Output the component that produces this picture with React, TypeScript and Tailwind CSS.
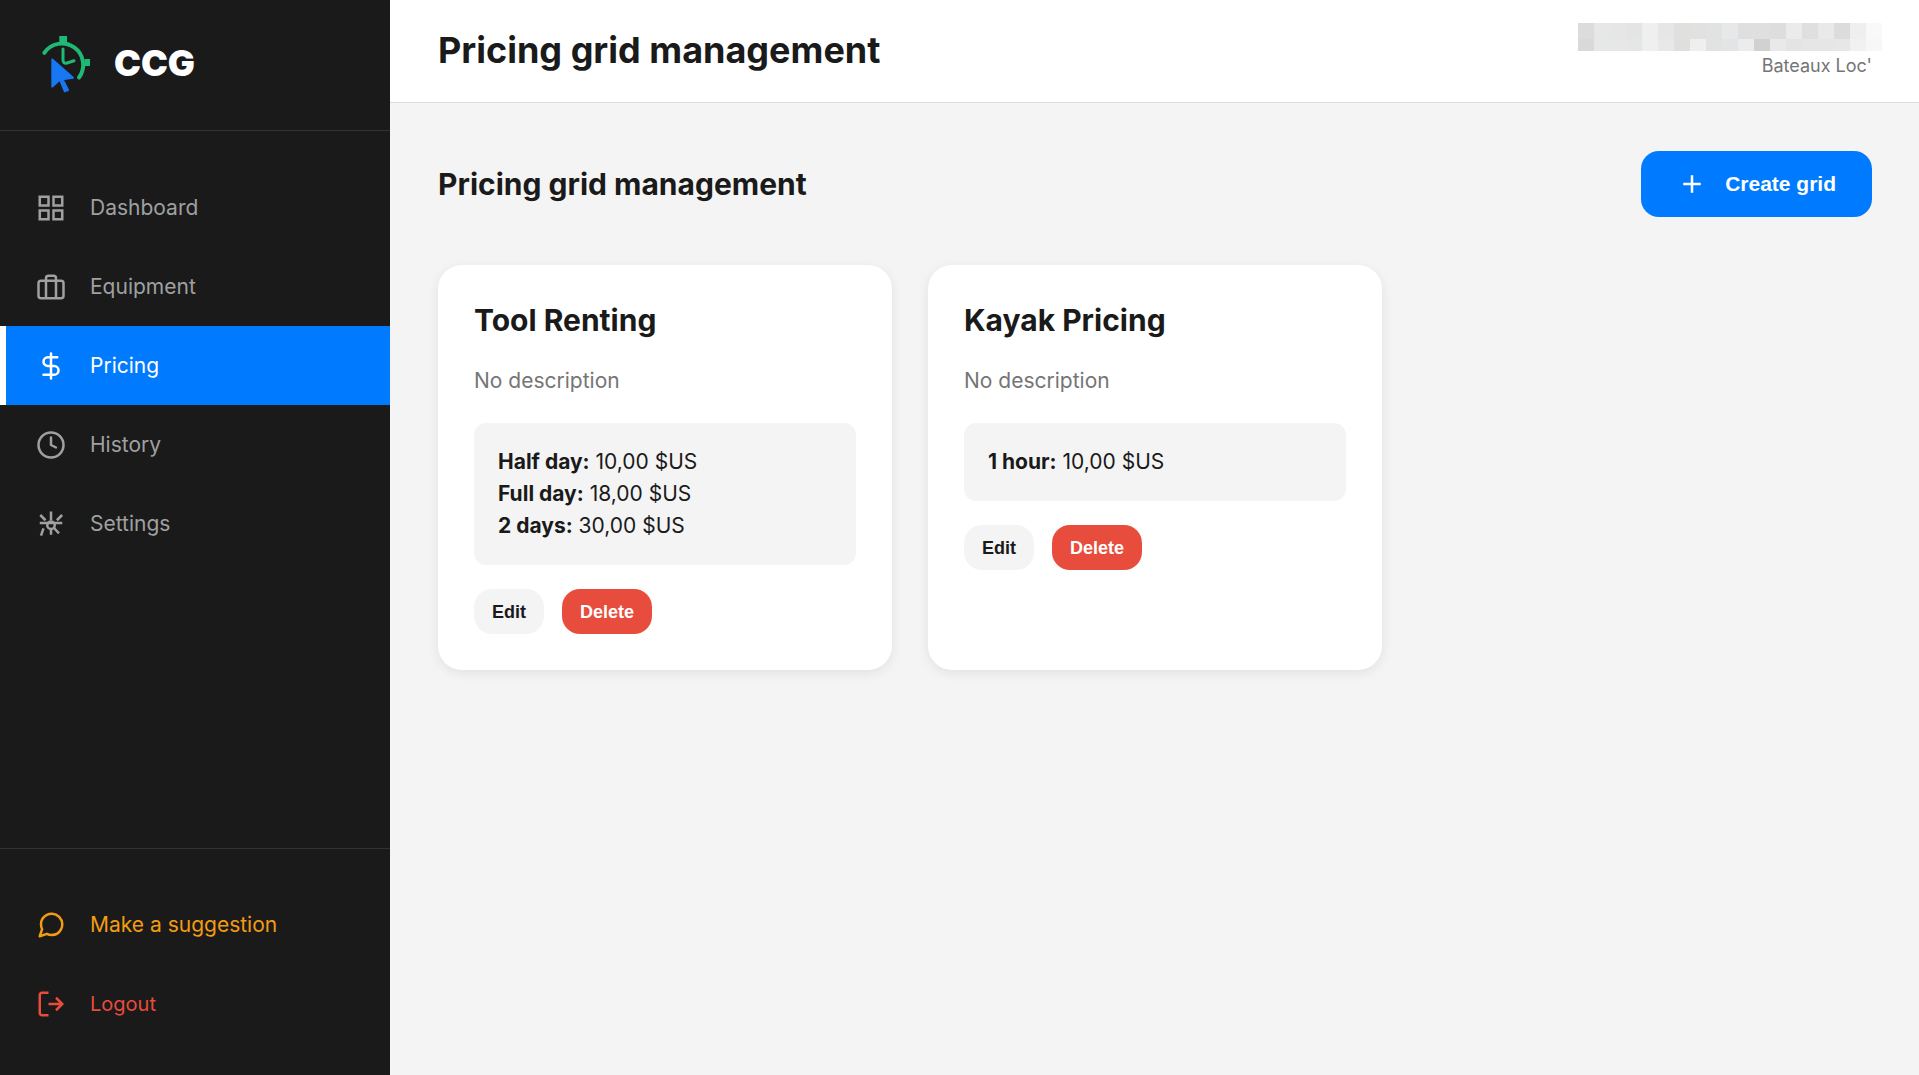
import React from "react";
import { Clock, DollarSign } from "lucide-react";
import { FiMessageCircle } from "react-icons/fi";

const iconProps = {
  width: 30,
  height: 30,
  viewBox: "0 0 24 24",
  fill: "none",
  stroke: "currentColor",
  strokeWidth: 2,
  "aria-hidden": true,
};

const DashboardIcon = () => (
  <svg {...iconProps}>
    <rect x="3" y="3" width="7" height="7" />
    <rect x="14" y="3" width="7" height="7" />
    <rect x="14" y="14" width="7" height="7" />
    <rect x="3" y="14" width="7" height="7" />
  </svg>
);

const EquipmentIcon = () => (
  <svg {...iconProps}>
    <rect x="2" y="7" width="20" height="14" rx="2" ry="2" />
    <path d="M16 21V5a2 2 0 0 0-2-2h-4a2 2 0 0 0-2 2v16" />
  </svg>
);

const SettingsIcon = () => (
  <svg {...iconProps}>
    <circle cx="12" cy="13" r="3" />
    <path d="M12 2v7M3.4 4.8l4.2 4.2M20.9 4.8l-4.2 4.2M3 11.2h18M6 15.5l-2 5.8M12 16v4.5M14 14.8l4.4 4.7" />
  </svg>
);

const LogoutIcon = () => (
  <svg {...iconProps}>
    <path d="M10 21H5a2 2 0 0 1-2-2V5a2 2 0 0 1 2-2h5" />
    <path d="M16 7l5 5-5 5M21 12H10" />
  </svg>
);

const Logo = () => (
  <svg width="62" height="62" viewBox="0 0 62 62" fill="none" aria-hidden="true">
    <g stroke="#1fb874" strokeWidth="4" strokeLinecap="round">
      <path d="M8.3 20.8A21.3 21.3 0 1 1 43 45.5" />
      <path d="M27 17v11q0 4 4 3L38 28.800" strokeWidth="3" strokeLinejoin="round" />
    </g>
    <path d="M23.300 4h7.700v6h-7.700zM48.500 27h5.500v7h-5.500z" fill="#1fb874" />
    <path
      d="M16.300 27.500L37 45.700L26.500 47.200L32 58L28.800 59.300L24 47.500L16.300 54.500z"
      fill="#1877f2"
      stroke="#1877f2"
      strokeWidth="2"
      strokeLinejoin="round"
    />
  </svg>
);

const menuItems = [
  { label: "Dashboard", href: "#dashboard", icon: <DashboardIcon /> },
  { label: "Equipment", href: "#equipment", icon: <EquipmentIcon /> },
  {
    label: "Pricing",
    href: "#pricing",
    icon: <DollarSign size={30} />,
    active: true,
  },
  { label: "History", href: "#history", icon: <Clock size={30} /> },
  { label: "Settings", href: "#settings", icon: <SettingsIcon /> },
];

const grids = [
  {
    name: "Tool Renting",
    prices: [
      { label: "Half day:", price: "10,00 $US" },
      { label: "Full day:", price: "18,00 $US" },
      { label: "2 days:", price: "30,00 $US" },
    ],
  },
  {
    name: "Kayak Pricing",
    prices: [{ label: "1 hour:", price: "10,00 $US" }],
  },
];

const linkBase = "flex h-[79px] items-center gap-6 border-l-6 pl-[30px]";

const Sidebar = () => (
  <aside className="flex w-[390px] shrink-0 flex-col bg-[#1a1a1a] text-[21px]">
    <div className="flex items-center gap-4 border-b border-[#333] pt-8 pr-9 pb-9 pl-9">
      <Logo />
      <span className="text-4xl font-black text-white">CCG</span>
    </div>
    <nav className="flex-1 pt-[37px]">
      <ul>
        {menuItems.map((item) => (
          <li key={item.href}>
            <a
              href={item.href}
              className={`${linkBase} ${
                item.active
                  ? "border-white bg-[#007bff] text-white"
                  : "border-transparent text-[#a0a0a0]"
              }`}
            >
              {item.icon}
              {item.label}
            </a>
          </li>
        ))}
      </ul>
    </nav>
    <div className="border-t border-[#333] pt-9 pb-8">
      <a
        href="#suggestion"
        className={`${linkBase} border-transparent text-[#f39c12]`}
      >
        <FiMessageCircle size={30} />
        Make a suggestion
      </a>
      <a
        href="#logout"
        className={`${linkBase} border-transparent text-xl text-[#e74c3c]`}
      >
        <LogoutIcon />
        Logout
      </a>
    </div>
  </aside>
);

// two rows of 16px blocks that hide the user's email
const maskRows = [
  "dcdcdc e6e8e7 e5e6e5 e3e4e4 efefef e7e6e6 e0e0df e1e1e0 e1e3e2 e7e8e9 dfdfdf dfdfde dddddd ebebeb dfdfdf e9e9e9 dcdcdc efefef f9f9f9",
  "d9d9d9 e6e8e7 e6e7e6 e5e6e6 efefef e8e8e8 dfdfdf efefef e2e2e2 e4e4e4 ebeced d1d1d1 e9e9e9 e4e4e4 e6e6e6 e6e6e6 e7e7e7 f1f1f1 f7f7f7",
].map((row) => row.split(" "));

const MaskedEmail = () => (
  <svg width="304" height="28" className="-mr-2.5" shapeRendering="crispEdges" aria-hidden="true">
    {maskRows.map((row, y) =>
      row.map((color, x) => (
        <rect
          key={`${x}-${y}`}
          x={x * 16}
          y={y * 16}
          width="16"
          height="16"
          fill={`#${color}`}
        />
      ))
    )}
  </svg>
);

const GridCard = ({ grid }: { grid: (typeof grids)[number] }) => (
  <article className="flex flex-col gap-6 rounded-3xl bg-white p-9 shadow-[0_3px_12px_rgba(0,0,0,0.08)]">
    <h3 className="text-3xl leading-[38px] font-bold">{grid.name}</h3>
    <p className="leading-9 text-[#757575]">No description</p>
    <ul className="rounded-xl bg-[#f4f4f4] px-6 py-[23px]">
      {grid.prices.map((p) => (
        <li key={p.label} className="leading-8">
          <strong className="font-bold">{p.label}</strong> {p.price}
        </li>
      ))}
    </ul>
    <div className="flex gap-[18px] font-['Liberation_Sans',sans-serif] text-lg font-bold">
      <button className="h-[45px] rounded-[18px] bg-[#f4f4f4] px-[18px]">
        Edit
      </button>
      <button className="h-[45px] rounded-[18px] bg-[#e74c3c] px-[18px] text-white">
        Delete
      </button>
    </div>
  </article>
);

const App = () => {
  return (
    <div className="flex min-h-screen bg-[#f4f4f4] font-['Inter',sans-serif] text-[21px] text-[#1a1a1a]">
      <Sidebar />
      <div className="flex-1">
        <header className="flex items-start justify-between border-b border-[#ddd] bg-white pt-[23px] pr-[47px] pb-[21px] pl-12">
          <h1 className="text-4xl leading-[54px] font-bold">
            Pricing grid management
          </h1>
          <div className="flex flex-col items-end">
            <MaskedEmail />
            <span className="text-lg leading-[30px] text-[#757575]">
              Bateaux Loc&apos;
            </span>
          </div>
        </header>
        <main className="py-12 pr-[47px] pl-12">
          <div className="mb-12 flex items-center justify-between">
            <h2 className="text-3xl font-bold">Pricing grid management</h2>
            <button className="flex h-[66px] items-center gap-[18px] rounded-[18px] bg-[#007bff] px-9 font-['Liberation_Sans',sans-serif] font-bold text-white">
              <svg {...iconProps}>
                <path d="M12 5v14M5 12h14" />
              </svg>
              Create grid
            </button>
          </div>
          <div className="grid grid-cols-[repeat(auto-fill,minmax(450px,1fr))] gap-9">
            {grids.map((grid) => (
              <GridCard key={grid.name} grid={grid} />
            ))}
          </div>
        </main>
      </div>
    </div>
  );
};

export default App;
